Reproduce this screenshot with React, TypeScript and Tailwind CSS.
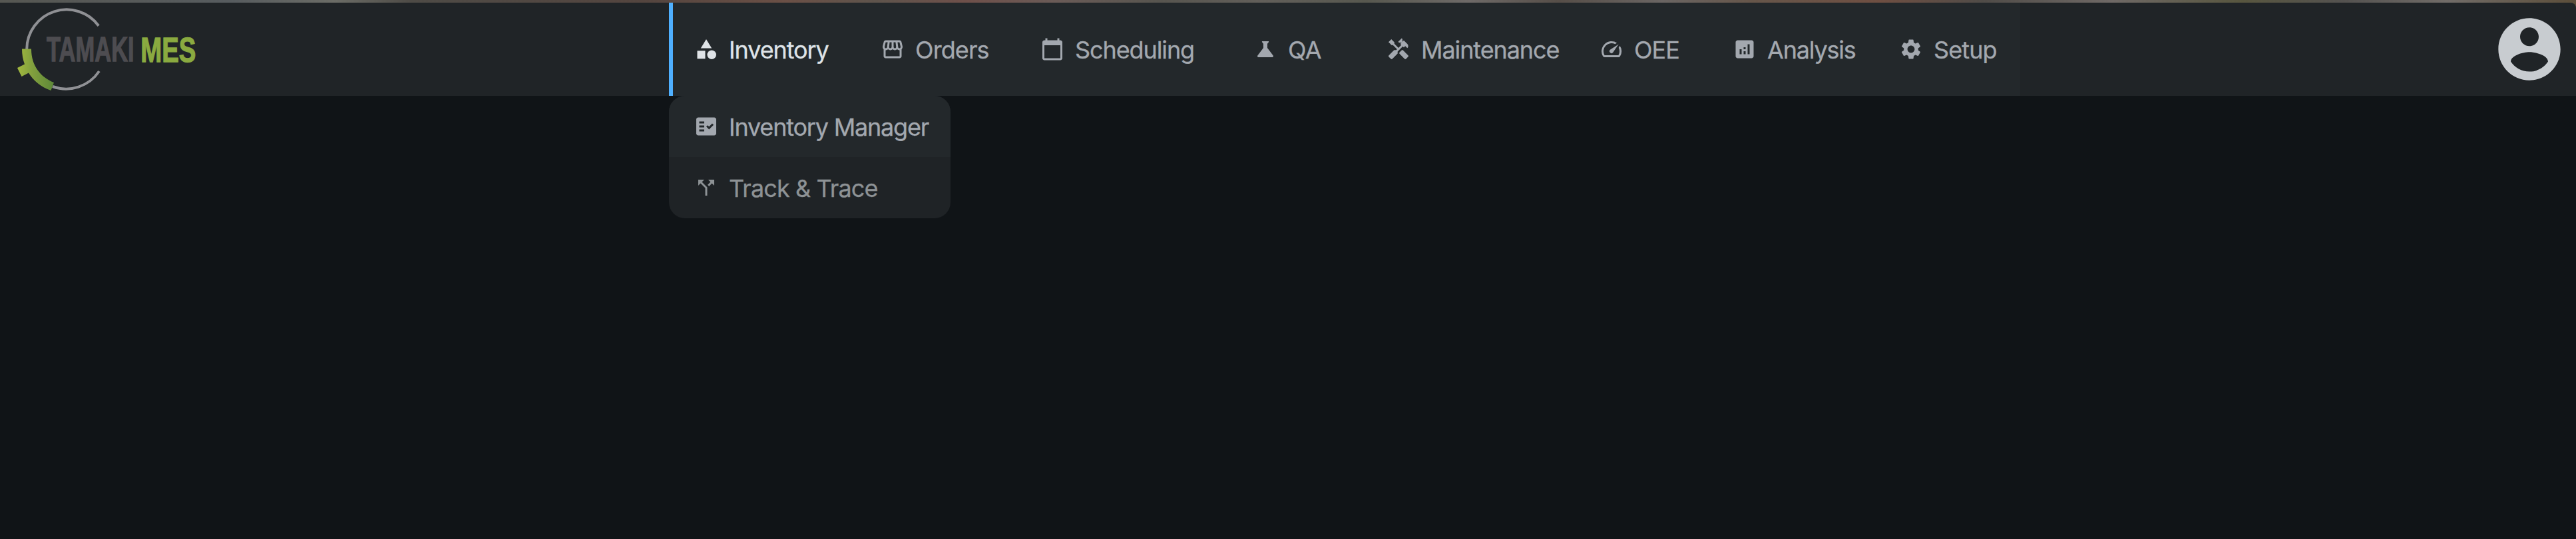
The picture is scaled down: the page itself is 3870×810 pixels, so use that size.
import type { ReactNode } from "react";
import type { IconType } from "react-icons";
import {
  MdAnalytics,
  MdCalendarToday,
  MdCallSplit,
  MdCategory,
  MdFactCheck,
  MdHandyman,
  MdOutlineStorefront,
  MdScience,
  MdSettings,
  MdSpeed,
} from "react-icons/md";

type NavEntry = { label: string; icon: IconType; width: string; tracking: string };

const entries: NavEntry[] = [
  { label: "Orders", icon: MdOutlineStorefront, width: "w-[240px]", tracking: "tracking-[-0.9px]" },
  { label: "Scheduling", icon: MdCalendarToday, width: "w-[320px]", tracking: "tracking-[-1.1px]" },
  { label: "QA", icon: MdScience, width: "w-[200px]", tracking: "tracking-[-0.6px]" },
  { label: "Maintenance", icon: MdHandyman, width: "w-[320px]", tracking: "tracking-[-1.1px]" },
  { label: "OEE", icon: MdSpeed, width: "w-[200px]", tracking: "tracking-[-1px]" },
  { label: "Analysis", icon: MdAnalytics, width: "w-[250px]", tracking: "tracking-[-1.2px]" },
  { label: "Setup", icon: MdSettings, width: "w-[182px]", tracking: "tracking-[-0.9px]" },
];

function Item({ icon: Icon, tracking, children }: { icon: IconType; tracking: string; children: ReactNode }) {
  return (
    <span className="flex items-center gap-4 whitespace-nowrap">
      <Icon className="size-9 shrink-0" />
      <span className={`pt-0.5 leading-none [-webkit-text-stroke:0.3px] ${tracking}`}>{children}</span>
    </span>
  );
}

function Logo() {
  return (
    <svg viewBox="0 0 300 140" className="h-[140px] w-[300px]" aria-label="Tamaki MES">
      <defs>
        <linearGradient id="leaf" x1="26" y1="0" x2="81" y2="0" gradientUnits="userSpaceOnUse">
          <stop offset="0" stopColor="#a3b93f" />
          <stop offset="0.4" stopColor="#82a03e" />
          <stop offset="1" stopColor="#5d8838" />
        </linearGradient>
      </defs>
      <path d="M40.2 70A59.8 59.8 0 0 1 148.2 34.8M79 126A59.8 59.8 0 0 0 149 103" fill="none" stroke="#8f9094" strokeWidth="4" />
      <path d="M33 69.5H47C47 95 61 112 81 120L76.5 132C61 126.5 50 117 43 105.5L32.5 111L26 98L37 92.5C34.5 86 33 78 33 69.5Z" fill="url(#leaf)" />
      <g fontFamily="Liberation Sans, sans-serif" fontWeight="700" fontSize="52.5" strokeWidth="1.3">
        <text transform="translate(70.1 88.2) scale(0.657 1)" fill="#4d4c50" stroke="#4d4c50">TAMAKI</text>
        <text transform="translate(211.2 88.6) scale(0.732 1)" fill="#8aaa40" stroke="#8aaa40">MES</text>
      </g>
    </svg>
  );
}

function Avatar() {
  return (
    <svg viewBox="0 0 24 24" className="size-28 text-[#c8ccd0]" fill="currentColor">
      <path d="M12 2C6.48 2 2 6.48 2 12s4.48 10 10 10 10-4.48 10-10S17.52 2 12 2zm0 3c1.66 0 3 1.34 3 3s-1.34 3-3 3-3-1.34-3-3 1.34-3 3-3zm0 14.2c-2.5 0-4.71-1.28-6-3.22.03-1.99 4-3.08 6-3.08 1.99 0 5.97 1.09 6 3.08-1.29 1.94-3.5 3.22-6 3.22z" />
    </svg>
  );
}

export default function App() {
  return (
    <div className="h-[810px] w-[3870px] overflow-hidden bg-[#101417] font-['Inter',sans-serif] text-[36px] text-[#a3a8af]">
      <div className="bg-[linear-gradient(90deg,#565752_0%,#575c5f_9%,#6b6c66_13%,#4e4b46_16%,#54453f_25%,#6b5046_30.5%,#5e544c_34%,#6f504a_37.5%,#6a5b57_41%,#57554f_45%,#625f5a_49%,#57584f_53%,#6e6a68_57%,#564e48_60.5%,#6a6563_64.5%,#66564a_68%,#6f4f42_73%,#504c48_77%,#6f6966_82%,#58563f_87%,#545250_91%,#716c68_95%,#5c4e3a_100%)] pt-1">
        <header className="flex h-[140px] overflow-hidden rounded-tr-lg bg-[#202427]">
          <div className="w-[1005px]">
            <Logo />
          </div>
          <nav className="flex h-[140px] w-[2030px] bg-[#23282b]">
            <div className="flex w-[286px] shrink-0 items-center border-l-[6px] border-[#4fb0ff] pl-8 text-[#dfe3e7]">
              <Item icon={MdCategory} tracking="tracking-[-1.1px]">Inventory</Item>
            </div>
            {entries.map((e) => (
              <div key={e.label} className={`flex shrink-0 items-center pl-8 ${e.width}`}>
                <Item icon={e.icon} tracking={e.tracking}>{e.label}</Item>
              </div>
            ))}
          </nav>
          <div className="flex flex-1 items-center justify-end pr-3.5">
            <Avatar />
          </div>
        </header>
      </div>
      <div className="ml-[1005px] w-[423px] overflow-hidden rounded-3xl bg-[#1f2326] text-[#8d9295]">
        <div className="flex h-[92px] items-center bg-[#23282b] pl-[38px] text-[#a3a8af]">
          <Item icon={MdFactCheck} tracking="tracking-[-1.2px]">Inventory Manager</Item>
        </div>
        <div className="flex h-[92px] items-center pl-[38px]">
          <Item icon={MdCallSplit} tracking="tracking-[-0.9px]">Track &amp; Trace</Item>
        </div>
      </div>
    </div>
  );
}
